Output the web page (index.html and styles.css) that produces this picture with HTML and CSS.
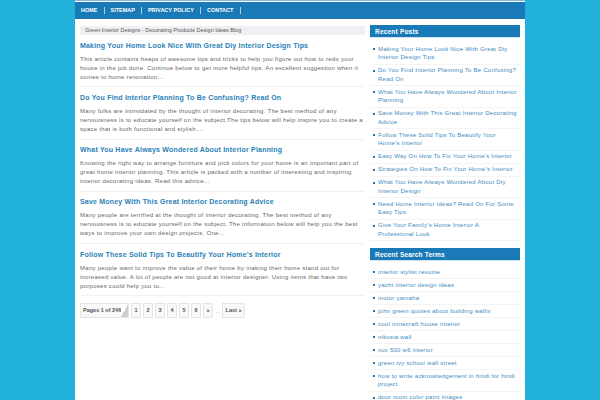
FILE: index.html
```html
<!DOCTYPE html>
<html lang="en">
<head>
<meta charset="utf-8">
<title>Green Interior Designs</title>
<link rel="stylesheet" href="styles.css">
</head>
<body>
<div class="wrap">
  <nav class="nav">
    <a href="#">HOME</a><a href="#">SITEMAP</a><a href="#">PRIVACY POLICY</a><a href="#">CONTACT</a>
  </nav>
  <div class="columns">
    <main class="main">
      <div class="crumb">Green Interior Designs - Decorating Products Design Ideas Blog</div>
      <article class="post">
        <h2>Making Your Home Look Nice With Great Diy Interior Design Tips</h2>
        <p>This article contains heaps of awesome tips and tricks to help you figure out how to redo your house in the job done. Continue below to get more helpful tips. An excellent suggestion when it comes to home renovation...</p>
      </article>
      <article class="post">
        <h2>Do You Find Interior Planning To Be Confusing? Read On</h2>
        <p>Many folks are intimidated by the thought of interior decorating. The best method of any nervousness is to educate yourself on the subject.The tips below will help inspire you to create a space that is both functional and stylish....</p>
      </article>
      <article class="post">
        <h2>What You Have Always Wondered About Interior Planning</h2>
        <p>Knowing the right way to arrange furniture and pick colors for your home is an important part of great home interior planning. This article is packed with a number of interesting and inspiring interior decorating ideas. Read this advice...</p>
      </article>
      <article class="post">
        <h2>Save Money With This Great Interior Decorating Advice</h2>
        <p>Many people are terrified at the thought of interior decorating. The best method of any nervousness is to educate yourself on the subject. The information below will help you the best ways to improve your own design projects. One...</p>
      </article>
      <article class="post">
        <h2>Follow These Solid Tips To Beautify Your Home’s Interior</h2>
        <p>Many people want to improve the value of their home by making their home stand out for increased value. A lot of people are not good at interior designer. Using items that have two purposes could help you to...</p>
      </article>
      <div class="pager">
        <span class="box pages">Pages 1 of 246</span><a class="box num" href="#">1</a><a class="box num" href="#">2</a><a class="box num" href="#">3</a><a class="box num" href="#">4</a><a class="box num" href="#">5</a><a class="box num" href="#">6</a><a class="box num" href="#">»</a><span class="dots">...</span><a class="box last" href="#">Last »</a>
      </div>
    </main>
    <aside class="side">
      <section class="widget">
        <h3>Recent Posts</h3>
        <ul>
          <li><a href="#">Making Your Home Look Nice With Great Diy Interior Design Tips</a></li>
          <li><a href="#">Do You Find Interior Planning To Be Confusing? Read On</a></li>
          <li><a href="#">What You Have Always Wondered About Interior Planning</a></li>
          <li><a href="#">Save Money With This Great Interior Decorating Advice</a></li>
          <li><a href="#">Follow These Solid Tips To Beautify Your Home’s Interior</a></li>
          <li><a href="#">Easy Way On How To Fix Your Home’s Interior</a></li>
          <li><a href="#">Strategies On How To Fix Your Home’s Interior</a></li>
          <li><a href="#">What You Have Always Wondered About Diy Interior Design</a></li>
          <li><a href="#">Need Home Interior Ideas? Read On For Some Easy Tips</a></li>
          <li><a href="#">Give Your Family’s Home Interior A<br>Professional Look</a></li>
        </ul>
      </section>
      <section class="widget">
        <h3>Recent Search Terms</h3>
        <ul>
          <li><a href="#">interior stylist resume</a></li>
          <li><a href="#">yacht interior design ideas</a></li>
          <li><a href="#">motor yamaha</a></li>
          <li><a href="#">john green quotes about building wallix</a></li>
          <li><a href="#">cool minecraft house interior</a></li>
          <li><a href="#">nikosia wall</a></li>
          <li><a href="#">xuv 500 w6 interior</a></li>
          <li><a href="#">green ivy school wall street</a></li>
          <li><a href="#">how to write acknowledgement in hindi for hindi project</a></li>
          <li><a href="#">door room color paint images</a></li>
        </ul>
      </section>
    </aside>
  </div>
</div>
</body>
</html>
```
FILE: styles.css
```css
* { box-sizing: border-box; }
html, body { margin: 0; height: 400px; overflow: hidden; }
body { background: #21b1d9; font-family: "Liberation Sans", Arial, sans-serif; color: #555; }
a { color: inherit; text-decoration: none; }
.wrap { width: 450px; height: 400px; margin-left: 75px; background: #fff; border-top: 1px solid #8ab9d8; overflow: hidden; }
.nav { display: flex; align-items: center; height: 17px; margin-top: 1px; background: #1a7ab8; padding-left: 6px; }
.nav a { color: #fff; font-size: 5.5px; font-weight: bold; line-height: 7px; padding-right: 6.5px; margin-right: 5.5px; border-right: 1px solid #a5cde6; }
.columns { display: flex; justify-content: space-between; padding: 6px 5px 0; }
.main { width: 285px; }
.side { width: 150px; }
.crumb { background: #eef0f3; height: 9px; margin-top: 1px; line-height: 9px; font-size: 5.5px; color: #555; padding-left: 5px; }
.post { border-bottom: 1px solid #f0f0f0; padding-bottom: 4.75px; margin-bottom: 3px; }
.post h2 { margin: 3.5px 0 0; font-size: 7px; letter-spacing: 0.2px; line-height: 13px; font-weight: bold; color: #2a7fb8; }
.post p { margin: 3px 0 0; font-size: 6px; letter-spacing: 0.28px; line-height: 9px; color: #666; }
.pager { display: flex; align-items: center; gap: 2px; margin-top: 7px; font-size: 5.5px; font-weight: bold; color: #555; }
.box { height: 15px; line-height: 13px; border: 1px solid #e4e4e4; background: #f8f8f8; text-align: center; }
.pages { position: relative; width: 49px; padding-left: 2px; text-align: left; white-space: nowrap; }
.pages::after { content: ""; position: absolute; right: 0; top: 0; width: 7px; height: 13px; background: linear-gradient(to bottom right, #fff 50%, #cfcfcf 50%); }
.num { width: 10px; }
.last { width: 23px; }
.dots { color: #999; font-weight: normal; width: 5px; text-align: center; }
.widget { margin-bottom: 7px; }
.widget h3 { margin: 0; height: 13px; line-height: 13px; background: #1a7ab8; border-bottom: 1px solid #cfe3f0; color: #fff; font-size: 6.5px; letter-spacing: 0.2px; padding-left: 5px; }
.widget ul { list-style: none; margin: 5px 0 0; padding: 0; }
.widget li { position: relative; padding: 1.75px 1.5px 1.75px 8px; border-bottom: 1px solid #f4f4f4; font-size: 6px; letter-spacing: 0.24px; line-height: 8.5px; color: #3d8ac0; }
.widget li::before { content: ""; position: absolute; left: 3px; top: 5px; width: 2px; height: 2px; background: #1a7ab8; }
```
